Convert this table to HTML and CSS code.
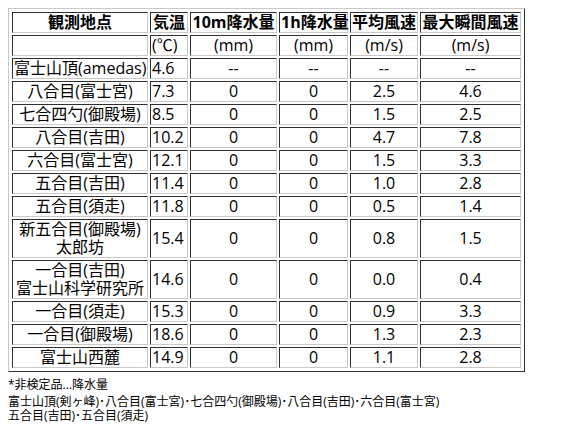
FILE: index.html
```html
<!DOCTYPE html>
<html lang="ja">
<head>
<meta charset="utf-8">
<title>富士山 観測データ</title>
<link rel="stylesheet" href="styles.css">
</head>
<body>
<table class="obs">
  <colgroup>
    <col class="c-site">
    <col class="c-temp">
    <col class="c-r10">
    <col class="c-r1h">
    <col class="c-wavg">
    <col class="c-wmax">
  </colgroup>
  <tr>
    <th>観測地点</th><th>気温</th><th>10m降水量</th><th>1h降水量</th><th>平均風速</th><th>最大瞬間風速</th>
  </tr>
  <tr>
    <td></td><td class="num">(℃)</td><td>(mm)</td><td>(mm)</td><td>(m/s)</td><td>(m/s)</td>
  </tr>
  <tr><td>富士山頂(amedas)</td><td class="num">4.6</td><td>--</td><td>--</td><td>--</td><td>--</td></tr>
  <tr><td>八合目(富士宮)</td><td class="num">7.3</td><td>0</td><td>0</td><td>2.5</td><td>4.6</td></tr>
  <tr><td>七合四勺(御殿場)</td><td class="num">8.5</td><td>0</td><td>0</td><td>1.5</td><td>2.5</td></tr>
  <tr><td>八合目(吉田)</td><td class="num">10.2</td><td>0</td><td>0</td><td>4.7</td><td>7.8</td></tr>
  <tr><td>六合目(富士宮)</td><td class="num">12.1</td><td>0</td><td>0</td><td>1.5</td><td>3.3</td></tr>
  <tr><td>五合目(吉田)</td><td class="num">11.4</td><td>0</td><td>0</td><td>1.0</td><td>2.8</td></tr>
  <tr><td>五合目(須走)</td><td class="num">11.8</td><td>0</td><td>0</td><td>0.5</td><td>1.4</td></tr>
  <tr><td>新五合目(御殿場)<br>太郎坊</td><td class="num">15.4</td><td>0</td><td>0</td><td>0.8</td><td>1.5</td></tr>
  <tr><td>一合目(吉田)<br>富士山科学研究所</td><td class="num">14.6</td><td>0</td><td>0</td><td>0.0</td><td>0.4</td></tr>
  <tr><td>一合目(須走)</td><td class="num">15.3</td><td>0</td><td>0</td><td>0.9</td><td>3.3</td></tr>
  <tr><td>一合目(御殿場)</td><td class="num">18.6</td><td>0</td><td>0</td><td>1.3</td><td>2.3</td></tr>
  <tr><td>富士山西麓</td><td class="num">14.9</td><td>0</td><td>0</td><td>1.1</td><td>2.8</td></tr>
</table>
<div class="note">
  <p class="note-title">*非検定品...降水量</p>
  <p class="note-list">富士山頂(剣ヶ峰)･八合目(富士宮)･七合四勺(御殿場)･八合目(吉田)･六合目(富士宮)<br>五合目(吉田)･五合目(須走)</p>
</div>
</body>
</html>
```
FILE: styles.css
```css
html, body {
  background: #ffffff;
}
body {
  margin: 8px;
  color: #000000;
  font-family: "Open Sans", "Noto Sans CJK JP", sans-serif;
}
.obs {
  box-sizing: border-box;
  width: 517px;
  table-layout: fixed;
  border-collapse: separate;
  border-spacing: 2px;
  padding: 1px;
  border-style: solid;
  border-width: 1px;
  border-color: #c9c9c9 #303030 #303030 #c9c9c9;
  font-size: 16px;
  line-height: 18px;
}
.c-site { width: 136px; }
.c-temp { width: 38px; }
.c-r10 { width: 87px; }
.c-r1h { width: 69px; }
.c-wavg { width: 68px; }
.c-wmax { width: 101px; }
.obs th,
.obs td {
  padding: 0 1px 1px 1px;
  border-style: solid;
  border-width: 1px;
  border-color: #303030 #c9c9c9 #c9c9c9 #303030;
  text-align: center;
  vertical-align: middle;
  white-space: nowrap;
  overflow: visible;
}
.obs th {
  font-weight: bold;
}
.obs td.num {
  text-align: left;
}
.note {
  margin-top: 6px;
  font-size: 12px;
  line-height: 14px;
}
.note p {
  margin: 0;
}
.note-title {
  padding-bottom: 3px;
}
```
